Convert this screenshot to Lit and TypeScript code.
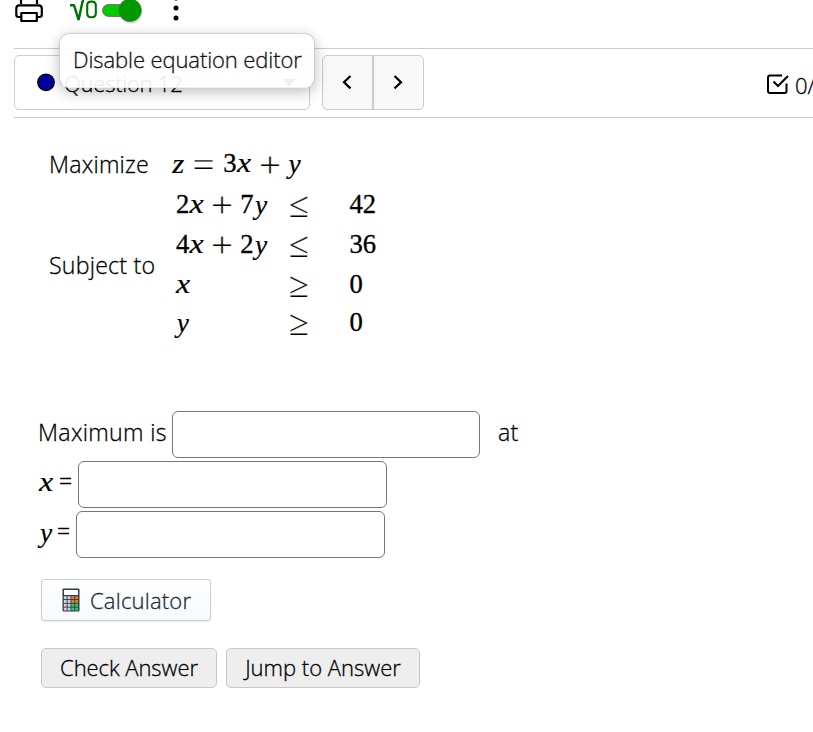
import { LitElement, html, svg, css } from "lit";
import { customElement, property } from "lit/decorators.js";

type Token = { t: string; x: number; y: number; w: number; k: "n" | "v" | "o" | "r" };

const num = (t: string, x: number, y: number): Token => ({ t, x, y, w: t.length * 13.3, k: "n" });
const vr = (t: string, x: number, y: number): Token =>
  t === "y" ? { t, x: x + 1.5, y, w: 12.2, k: "v" } : t === "z" ? { t, x: x + 0.2, y, w: 12, k: "v" } : { t, x, y, w: 14.2, k: "v" };
const op = (t: string, x: number, y: number): Token => ({ t, x, y, w: 22, k: "o" });
const rel = (t: string, x: number, y: number): Token => ({ t, x, y, w: 20, k: "r" });

@customElement("math-text")
export class MathText extends LitElement {
  @property({ attribute: false }) tokens: Token[] = [];
  @property({ type: Number }) w = 20;
  @property({ type: Number }) h = 40;

  static styles = css`
    :host { display: block; flex: none; }
    svg { display: block; overflow: visible; }
    text { font-family: "Liberation Serif", serif; font-size: 26.6px; fill: #000; }
    .n { stroke: #000; stroke-width: 0.35px; }
    .v { font-style: italic; stroke: #000; stroke-width: 0.2px; }
    .o { font-size: 36px; stroke: #fff; stroke-width: 0.25px; }
    .r { font-size: 36px; stroke: #fff; stroke-width: 0.25px; }
  `;

  render() {
    return html`<svg width=${this.w} height=${this.h}>
      ${this.tokens.map(
        (k) => svg`<text class=${k.k} x=${k.x} y=${k.y} textLength=${k.w} lengthAdjust="spacingAndGlyphs">${k.t}</text>`
      )}
    </svg>`;
  }
}

const objective: Token[] = [
  vr("z", 0, 18.5), op("=", 20.5, 23), num("3", 51.3, 18), vr("x", 65, 18), op("+", 87, 23), vr("y", 115, 18.5),
];

const constraints: Token[] = [
  num("2", 4, 24), vr("x", 17.5, 24), op("+", 39, 28), num("7", 68.3, 24), vr("y", 81.5, 24.5), rel("≤", 117, 27.5), num("42", 177.5, 24),
  num("4", 4, 64), vr("x", 17.5, 64), op("+", 39, 68), num("2", 68.3, 64), vr("y", 81.5, 64.5), rel("≤", 117, 67.5), num("36", 177.5, 64),
  vr("x", 4, 104), rel("≥", 117, 107.5), num("0", 177.5, 104),
  vr("y", 3.2, 143), rel("≥", 117, 145.5), num("0", 177.5, 142),
];

@customElement("app-root")
export class AppRoot extends LitElement {
  static styles = css`
    :host {
      display: block; position: relative; width: 813px; height: 732px; overflow: hidden;
      background: #fff; color: #000; font: 300 22px/30px "Open Sans", "Noto Sans", sans-serif; -webkit-text-stroke: 0.3px;
    }
    * { box-sizing: border-box; }
    svg { display: block; flex: none; }
    math-text { -webkit-text-stroke: 0; }
    .page { width: 813px; padding-left: 14px; }
    .toolbar { height: 49px; border-bottom: 1px solid #ccc; display: flex; align-items: flex-start; }
    .nav { height: 69px; border-bottom: 1px solid #ccc; display: flex; align-items: flex-start; padding-top: 6px; white-space: nowrap; }
    .nav > * { flex: none; }
    .select { width: 296px; height: 55px; border: 1px solid #ccc; border-radius: 5px; display: flex; align-items: center; padding: 0 14px 0 21px; }
    .select .label { flex: 1; margin-left: 8px; letter-spacing: -0.25px; }
    .pager { display: flex; width: 102px; height: 55px; margin-left: 12px; border: 1px solid #ccc; border-radius: 5px; background: #f8f8f8; }
    .pager span { flex: 1; display: flex; align-items: center; justify-content: center; padding-right: 2px; }
    .pager span + span { border-left: 2px solid #ccc; }
    .score { display: flex; margin: 15px 0 0 343px; gap: 6px; }
    .obj { display: flex; height: 62px; padding: 31px 0 0 35px; }
    .cap { width: 123px; white-space: nowrap; font-size: 23.2px; letter-spacing: 0.2px; }
    .obj math-text { margin-top: 5px; }
    .sub { display: flex; height: 220px; padding: 9px 0 0 35px; }
    .sub .cap { margin-top: 61px; }
    .row { display: flex; height: 47px; margin-bottom: 3px; padding-left: 25px; white-space: nowrap; }
    .row.first { margin-top: 11px; }
    .field { height: 47px; border: 1px solid #777; border-radius: 6px; background: #fff; }
    .row .txt { margin-top: 6px; font-size: 23.2px; letter-spacing: 0.3px; }
    .row .txt:first-child { margin-left: -1px; margin-right: 1px; }
    .eq { margin-top: 5px; font-size: 23px; }
    .eq { margin-left: -1px; margin-right: 1px; }
    .calc {
      display: flex; align-items: center; width: 170px; height: 42px; margin: 21px 0 0 27px; padding-left: 20px; gap: 10px; letter-spacing: 0.2px;
      border: 1px solid #c4cdd8; border-radius: 3px; color: #232b36; background: linear-gradient(#fff, #f6f9fc); box-shadow: 0 1px 2px rgba(0, 0, 0, 0.07);
    }
    .actions { display: flex; gap: 9px; margin: 27px 0 0 27px; }
    .btn { height: 40px; border: 1px solid #c8c8c8; border-radius: 5px; background: #eee; display: flex; align-items: center; justify-content: center; white-space: nowrap; padding-bottom: 2px; }
    .check { width: 176px; letter-spacing: -0.05px; }
    .jump { width: 194px; }
    .tip {
      position: absolute; left: 59px; top: 33px; width: 256px; height: 55px; border: 1px solid #ccc; border-bottom-color: #eee; border-radius: 10px;
      background: #fff; opacity: 0.92; box-shadow: 0 4px 14px rgba(0, 0, 0, 0.28); padding: 10px 0 0 13px; white-space: nowrap; letter-spacing: -0.1px;
    }
  `;

  render() {
    return html`
      <div class="page">
        <div class="toolbar">
          <svg width="180" height="30" viewBox="14 0 180 30" fill="none">
            <path d="M21 4V-2H37V4M21 17H18.5Q16.3 17 16.3 14.8V8.5Q16.3 5.3 19.5 5.3H38.5Q41.8 5.3 41.8 8.5V14.8Q41.8 17 39.5 17H37M21.3 13H36.8V21H21.3Z" stroke="#000" stroke-width="2.2" stroke-linejoin="round" />
            <path d="M70 5.2H74L78.6 20L82.6 1H84" stroke="#007000" stroke-width="2.4" stroke-linejoin="bevel" />
            <rect x="87.2" y="1.6" width="8.6" height="15.6" rx="3.4" stroke="#007000" stroke-width="2.1" />
            <rect x="102.5" y="4.5" width="36" height="12" rx="6" fill="#0c0" stroke="#777" />
            <circle cx="131" cy="12" r="11.5" fill="#000" opacity="0.14" />
            <circle cx="130" cy="10.3" r="11.3" fill="#090" stroke="#4c704c" stroke-width="0.8" />
            <circle cx="176" cy="-2" r="2.5" fill="#000" />
            <circle cx="176" cy="8" r="2.5" fill="#000" />
            <circle cx="176" cy="18" r="2.5" fill="#000" />
          </svg>
        </div>
        <div class="nav">
          <div class="select">
            <svg width="20" height="20"><circle cx="10" cy="9.3" r="8.2" fill="#00009f" stroke="#000" stroke-width="1.4" /></svg>
            <span class="label">Question 12</span>
            <svg width="12" height="10"><path d="M0 1H12L6 9Z" fill="#333" /></svg>
          </div>
          <div class="pager">
            <span><svg width="10" height="16"><path d="M8.5 1L2 7.2L8.5 13.4" fill="none" stroke="#000" stroke-width="2.2" /></svg></span>
            <span><svg width="10" height="16"><path d="M1.5 1L8 7.2L1.5 13.4" fill="none" stroke="#000" stroke-width="2.2" /></svg></span>
          </div>
          <div class="score">
            <svg width="22" height="26" fill="none" stroke="#000" stroke-width="2"><path d="M15 5.5H3Q1 5.5 1 7.5V21Q1 23 3 23H17.5Q19.5 23 19.5 21V13.5M6.5 11.5L11 16L21 6" /></svg>
            <span>0/</span>
          </div>
        </div>
        <div class="obj">
          <span class="cap">Maximize</span>
          <math-text .tokens=${objective} .w=${130} .h=${26}></math-text>
        </div>
        <div class="sub">
          <span class="cap">Subject to</span>
          <math-text .tokens=${constraints} .w=${206} .h=${155}></math-text>
        </div>
        <div class="row first">
          <span class="txt" style="width:133px">Maximum is</span>
          <div class="field" style="width:308px"></div>
          <span class="txt" style="margin-left:18px">at</span>
        </div>
        <div class="row">
          <math-text .tokens=${[vr("x", 0, 30)]} .w=${21} .h=${40}></math-text>
          <span class="eq" style="width:18px">=</span>
          <div class="field" style="width:309px"></div>
        </div>
        <div class="row">
          <math-text .tokens=${[vr("y", -0.5, 31)]} .w=${19} .h=${40}></math-text>
          <span class="eq" style="width:18px">=</span>
          <div class="field" style="width:309px"></div>
        </div>
        <div class="calc">
          <svg width="18" height="24">
            <rect x="0.5" y="0.5" width="17" height="23" rx="1" fill="#343a44" />
            <rect x="2" y="2" width="14" height="5" fill="#fff" />
            ${[0, 1, 2, 3].map((r) =>
              [0, 1, 2, 3].map(
                (c) => svg`<rect x=${1.8 + c * 3.8} y=${8.2 + r * 3.8} width="2.9" height="2.9" fill=${c < 2 ? "#cfd5dc" : r < 2 ? "#e67e22" : "#2ecc71"} />`
              )
            )}
          </svg>
          <span>Calculator</span>
        </div>
        <div class="actions">
          <div class="btn check">Check Answer</div>
          <div class="btn jump">Jump to Answer</div>
        </div>
      </div>
      <div class="tip">Disable equation editor</div>
    `;
  }
}
